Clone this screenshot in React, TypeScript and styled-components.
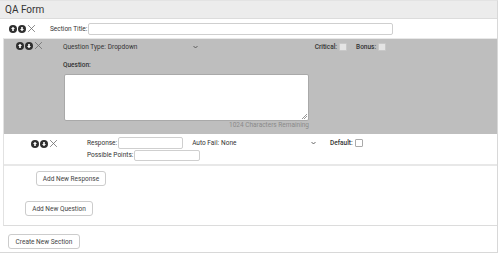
import styled, { createGlobalStyle } from "styled-components";

const GlobalStyle = createGlobalStyle`
  html, body {
    margin: 0;
    padding: 0;
    background: #ffffff;
  }
  body {
    font-family: Roboto, "Liberation Sans", sans-serif;
    color: #333333;
  }
`;

const MoveIcon = ({ dir }: { dir: "up" | "down" }) => (
  <svg width="8" height="8" viewBox="0 0 16 16">
    <circle cx="8" cy="8" r="8" fill="#2f2f2f" />
    {dir === "up" ? (
      <path d="M8 3.5 L12 8 H9.6 V12 H6.4 V8 H4 Z" fill="#ffffff" />
    ) : (
      <path d="M8 12.5 L12 8 H9.6 V4 H6.4 V8 H4 Z" fill="#ffffff" />
    )}
  </svg>
);

const RemoveIcon = () => (
  <svg width="9" height="9" viewBox="0 0 16 16">
    <path d="M2 2 L14 14 M14 2 L2 14" stroke="#6a6a6a" strokeWidth="1.4" fill="none" />
  </svg>
);

const Chevron = () => (
  <svg width="5" height="4" viewBox="0 0 10 8">
    <path d="M1 2 L5 6 L9 2" stroke="#444" strokeWidth="1.6" fill="none" />
  </svg>
);

const Controls = ({ left }: { left: number }) => (
  <IconGroup left={left}>
    <MoveIcon dir="up" />
    <MoveIcon dir="down" />
    <RemoveIcon />
  </IconGroup>
);

const App = () => {
  return (
    <>
      <GlobalStyle />
      <Card>
        <Header>QA Form</Header>

        <SectionHead>
          <Controls left={9} />
          <Label style={{ marginLeft: 14 }}>Section Title:</Label>
          <TextInput w={305} h={12} />
        </SectionHead>

        <SectionBody>
          <QuestionBlock>
            <IconCol w={59}>
              <Controls left={12} />
            </IconCol>
            <QuestionMain>
              <Line>
                <Label>Question Type:</Label>
                <FakeSelect w={92}>
                  <span>Dropdown</span>
                  <Chevron />
                </FakeSelect>
                <Label bold style={{ marginLeft: 117 }}>Critical:</Label>
                <Check />
                <Label bold style={{ marginLeft: 9 }}>Bonus:</Label>
                <Check />
              </Line>
              <QuestionLabel>Question:</QuestionLabel>
              <QuestionArea />
              <Counter>1024 Characters Remaining</Counter>
            </QuestionMain>
          </QuestionBlock>

          <ResponseRow>
            <IconCol w={83}>
              <Controls left={27} />
            </IconCol>
            <ResponseFields>
              <Line>
                <Label>Response:</Label>
                <TextInput w={65} h={12} />
                <Label style={{ marginLeft: 9 }}>Auto Fail:</Label>
                <FakeSelect w={97}>
                  <span>None</span>
                  <Chevron />
                </FakeSelect>
                <Label bold style={{ marginLeft: 14 }}>Default:</Label>
                <Check white />
              </Line>
              <Line>
                <Label>Possible Points:</Label>
                <TextInput w={66} h={11} />
              </Line>
            </ResponseFields>
          </ResponseRow>

          <ButtonArea pl={32} pt={5} pb={0}>
            <Button w={70}>Add New Response</Button>
          </ButtonArea>
          <ButtonArea pl={21} pt={15} pb={9}>
            <Button w={68}>Add New Question</Button>
          </ButtonArea>
        </SectionBody>

        <ButtonArea pl={8} pt={8} pb={3}>
          <Button w={72}>Create New Section</Button>
        </ButtonArea>
      </Card>
    </>
  );
};

export default App;

const Card = styled.div`
  width: 497px;
  border-top: 1px solid #e3e3e3;
  border-right: 1px solid #d8d8d8;
  border-bottom: 1px solid #d8d8d8;
`;

const Header = styled.div`
  height: 17px;
  display: flex;
  align-items: center;
  padding-left: 5px;
  background-color: #ececec;
  border-bottom: 1px solid #dcdcdc;
  font-size: 10px;
  color: #333;
`;

const SectionHead = styled.div`
  height: 19px;
  display: flex;
  align-items: center;
`;

const IconGroup = styled.div<{ left: number }>`
  display: flex;
  align-items: center;
  gap: 0.5px;
  padding-left: ${(p) => p.left}px;
  & > svg:last-child {
    margin-left: 1px;
  }
`;

const Label = styled.span<{ bold?: boolean }>`
  font-size: 6.5px;
  font-weight: ${(p) => (p.bold ? 500 : 400)};
  color: #333;
  white-space: nowrap;
`;

const TextInput = styled.div<{ w: number; h: number }>`
  width: ${(p) => p.w}px;
  height: ${(p) => p.h}px;
  box-sizing: border-box;
  margin-left: 1px;
  background: #ffffff;
  border: 1px solid #cfcfcf;
  border-radius: 2px;
`;

const SectionBody = styled.div`
  margin-left: 3px;
  border-left: 1px solid #e2e2e2;
  border-bottom: 1px solid #dcdcdc;
  border-top: 1px solid #e8e8e8;
`;

const QuestionBlock = styled.div`
  height: 95px;
  display: flex;
  background-color: #bebebe;
`;

const IconCol = styled.div<{ w: number }>`
  width: ${(p) => p.w}px;
  flex-shrink: 0;
  padding-top: 2px;
`;

const QuestionMain = styled.div`
  display: flex;
  flex-direction: column;
  padding-top: 2px;
`;

const Line = styled.div`
  height: 12px;
  display: flex;
  align-items: center;
`;

const FakeSelect = styled.div<{ w: number }>`
  width: ${(p) => p.w}px;
  display: flex;
  align-items: center;
  justify-content: space-between;
  padding-left: 2px;
  box-sizing: border-box;
  font-size: 6.5px;
  color: #333;
`;

const Check = styled.span<{ white?: boolean }>`
  width: 6px;
  height: 6px;
  margin-left: 2px;
  border: 1px solid ${(p) => (p.white ? "#aaa" : "#c8c8c8")};
  border-radius: 1px;
  background: ${(p) => (p.white ? "#ffffff" : "#e4e4e4")};
`;

const QuestionLabel = styled.div`
  margin-top: 7px;
  height: 10px;
  display: flex;
  align-items: center;
  font-size: 6.5px;
  font-weight: 500;
`;

const QuestionArea = styled.div`
  position: relative;
  margin-top: 4px;
  margin-left: 1px;
  width: 245px;
  height: 47px;
  box-sizing: border-box;
  background: #ffffff;
  border: 1px solid #a9a9a9;
  border-radius: 2px;
  &::after {
    content: "";
    position: absolute;
    right: 1px;
    bottom: 1px;
    width: 5px;
    height: 5px;
    background: linear-gradient(135deg, transparent 45%, #999 45%, #999 55%, transparent 55%, transparent 70%, #999 70%, #999 80%, transparent 80%);
  }
`;

const Counter = styled.div`
  width: 246px;
  text-align: right;
  font-size: 6.5px;
  line-height: 9px;
  color: #8a8a8a;
`;

const ResponseRow = styled.div`
  height: 32px;
  display: flex;
  padding-top: 3px;
  box-sizing: border-box;
  border-bottom: 2px solid #e8e8e8;
`;

const ResponseFields = styled.div`
  display: flex;
  flex-direction: column;
`;

const ButtonArea = styled.div<{ pl: number; pt: number; pb: number }>`
  display: flex;
  padding: ${(p) => `${p.pt}px 0 ${p.pb}px ${p.pl}px`};
`;

const Button = styled.button<{ w: number }>`
  width: ${(p) => p.w}px;
  height: 15px;
  padding: 0;
  display: flex;
  align-items: center;
  justify-content: center;
  background: #ffffff;
  border: 1px solid #cccccc;
  border-radius: 3px;
  font-family: Roboto, "Liberation Sans", sans-serif;
  font-size: 6.5px;
  color: #444;
`;
